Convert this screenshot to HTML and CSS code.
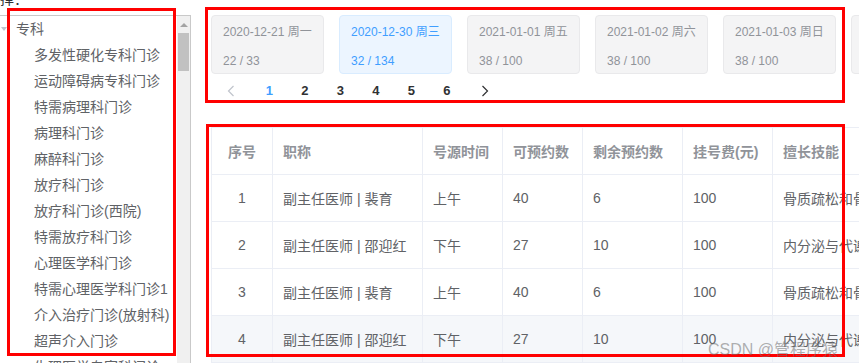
FILE: index.html
```html
<!DOCTYPE html>
<html lang="zh-CN">
<head>
    <meta charset="UTF-8">
    <meta name="viewport" content="width=device-width, initial-scale=1.0">
    <title>预约挂号</title>
    <link rel="stylesheet" href="styles.css">
</head>
<body>
    <div class="page">
        <div class="label">选择：</div>

        <div class="main">
            <aside class="tree-box">
                <ul class="tree">
                    <li class="tree-node root"><span class="caret"></span>专科</li>
                    <li class="tree-node">多发性硬化专科门诊</li>
                    <li class="tree-node">运动障碍病专科门诊</li>
                    <li class="tree-node">特需病理科门诊</li>
                    <li class="tree-node">病理科门诊</li>
                    <li class="tree-node">麻醉科门诊</li>
                    <li class="tree-node">放疗科门诊</li>
                    <li class="tree-node">放疗科门诊(西院)</li>
                    <li class="tree-node">特需放疗科门诊</li>
                    <li class="tree-node">心理医学科门诊</li>
                    <li class="tree-node">特需心理医学科门诊1</li>
                    <li class="tree-node">介入治疗门诊(放射科)</li>
                    <li class="tree-node">超声介入门诊</li>
                    <li class="tree-node">生理医学专家科门诊</li>
                </ul>
                <div class="scrollbar">
                    <div class="scroll-arrow"><span></span></div>
                    <div class="scroll-thumb"></div>
                </div>
            </aside>

            <section class="content">
                <div class="dates">
                    <div class="date-card">
                        <div class="date-day">2020-12-21 周一</div>
                        <div class="date-count">22 / 33</div>
                    </div>
                    <div class="date-card active">
                        <div class="date-day">2020-12-30 周三</div>
                        <div class="date-count">32 / 134</div>
                    </div>
                    <div class="date-card">
                        <div class="date-day">2021-01-01 周五</div>
                        <div class="date-count">38 / 100</div>
                    </div>
                    <div class="date-card">
                        <div class="date-day">2021-01-02 周六</div>
                        <div class="date-count">38 / 100</div>
                    </div>
                    <div class="date-card">
                        <div class="date-day">2021-01-03 周日</div>
                        <div class="date-count">38 / 100</div>
                    </div>
                    <div class="date-card">
                        <div class="date-day">2021-01-04 周一</div>
                        <div class="date-count">38 / 100</div>
                    </div>
                </div>

                <div class="pagination">
                    <button class="btn-prev" disabled>
                        <svg width="8" height="12" viewBox="0 0 8 12"><path d="M6.5 1 L1.5 6 L6.5 11" fill="none" stroke="currentColor" stroke-width="1.2"/></svg>
                    </button>
                    <ul class="pager">
                        <li class="active">1</li>
                        <li>2</li>
                        <li>3</li>
                        <li>4</li>
                        <li>5</li>
                        <li>6</li>
                    </ul>
                    <button class="btn-next">
                        <svg width="8" height="12" viewBox="0 0 8 12"><path d="M1.5 1 L6.5 6 L1.5 11" fill="none" stroke="currentColor" stroke-width="1.2"/></svg>
                    </button>
                </div>

                <table class="doctor-table">
                    <colgroup>
                        <col style="width: 61px">
                        <col style="width: 150px">
                        <col style="width: 80px">
                        <col style="width: 80px">
                        <col style="width: 100px">
                        <col style="width: 90px">
                        <col style="width: 240px">
                    </colgroup>
                    <thead>
                        <tr>
                            <th class="center">序号</th>
                            <th>职称</th>
                            <th>号源时间</th>
                            <th>可预约数</th>
                            <th>剩余预约数</th>
                            <th>挂号费(元)</th>
                            <th>擅长技能</th>
                        </tr>
                    </thead>
                    <tbody>
                        <tr>
                            <td class="center">1</td>
                            <td>副主任医师 | 裴育</td>
                            <td>上午</td>
                            <td>40</td>
                            <td>6</td>
                            <td>100</td>
                            <td>骨质疏松和骨代谢疾病</td>
                        </tr>
                        <tr>
                            <td class="center">2</td>
                            <td>副主任医师 | 邵迎红</td>
                            <td>下午</td>
                            <td>27</td>
                            <td>10</td>
                            <td>100</td>
                            <td>内分泌与代谢性疾病</td>
                        </tr>
                        <tr>
                            <td class="center">3</td>
                            <td>副主任医师 | 裴育</td>
                            <td>上午</td>
                            <td>40</td>
                            <td>6</td>
                            <td>100</td>
                            <td>骨质疏松和骨代谢疾病</td>
                        </tr>
                        <tr class="hover">
                            <td class="center">4</td>
                            <td>副主任医师 | 邵迎红</td>
                            <td>下午</td>
                            <td>27</td>
                            <td>10</td>
                            <td>100</td>
                            <td>内分泌与代谢性疾病</td>
                        </tr>
                    </tbody>
                </table>
            </section>
        </div>

        <!-- 标注框 -->
        <div class="mark mark-tree"></div>
        <div class="mark mark-dates"></div>
        <div class="mark mark-table"></div>
        <div class="watermark">CSDN @管程序猿</div>
    </div>
</body>
</html>
```

FILE: styles.css
```css
:root {
    --text-main: #303133;
    --text-regular: #606266;
    --text-secondary: #909399;
    --text-placeholder: #c0c4cc;
    --primary: #409eff;
    --border-light: #ebeef5;
}

body {
    margin: 0;
    overflow: hidden;
    font-family: "Liberation Sans", "Noto Sans CJK SC", sans-serif;
    color: var(--text-regular);
    background: #fff;
}

.page {
    position: relative;
    display: flow-root;
    width: 1200px;
    height: 363px;
}

.label {
    margin: -13px 0 4px -14px;
    height: 24px;
    line-height: 24px;
    font-size: 14px;
    color: var(--text-main);
}

.main {
    display: flex;
    align-items: flex-start;
    gap: 20px;
}

/* 左侧科室树 */
.tree-box {
    display: flex;
    width: 191px;
    height: 400px;
    box-sizing: border-box;
    border-top: 1px solid #c9c9c9;
    border-right: 1px solid #c9c9c9;
    background: #fff;
}

.tree {
    list-style: none;
    margin: 0;
    padding: 0;
    flex: 1;
    overflow: hidden;
}

.tree-node {
    height: 26px;
    line-height: 26px;
    font-size: 14px;
    padding-left: 34px;
    white-space: nowrap;
}

.tree-node.root {
    display: flex;
    align-items: center;
    padding-left: 1px;
}

.caret {
    width: 0;
    height: 0;
    border-left: 3px solid transparent;
    border-right: 3px solid transparent;
    border-top: 4px solid var(--text-placeholder);
    margin-right: 9px;
}

.scrollbar {
    width: 13px;
    background: #f0f0f0;
}

.scroll-arrow {
    height: 17px;
    display: flex;
    justify-content: center;
    align-items: center;
}

.scroll-arrow span {
    width: 0;
    height: 0;
    border-left: 4px solid transparent;
    border-right: 4px solid transparent;
    border-bottom: 4px solid #a3a3a3;
}

.scroll-thumb {
    margin: 0 1px;
    height: 38px;
    background: #c1c1c1;
}

/* 日期卡片 */
.content {
    flex: 1;
}

.dates {
    display: flex;
    gap: 15px;
}

.date-card {
    flex: none;
    width: 113px;
    height: 59px;
    box-sizing: border-box;
    padding: 6px 11px 0;
    border: 1px solid #e9e9eb;
    border-radius: 4px;
    background: #f4f4f5;
    color: var(--text-secondary);
    font-size: 12px;
    line-height: 20px;
    white-space: nowrap;
}

.date-card.active {
    background: #ecf5ff;
    border-color: #d9ecff;
    color: var(--primary);
}

.date-count {
    margin-top: 9px;
}

/* 分页 */
.pagination {
    display: flex;
    padding: 3px 5px;
}

.pagination button {
    min-width: 35.5px;
    height: 28px;
    box-sizing: border-box;
    border: none;
    background: none;
    color: var(--text-main);
    display: flex;
    align-items: center;
    justify-content: center;
    cursor: pointer;
}

.btn-prev {
    padding: 0 12px 0 6px;
}

.btn-next {
    padding: 0 6px 0 12px;
}

.pagination button:disabled {
    color: var(--text-placeholder);
    cursor: not-allowed;
}

.pager {
    display: flex;
    list-style: none;
    margin: 0;
    padding: 0;
}

.pager li {
    min-width: 35.5px;
    height: 28px;
    line-height: 28px;
    text-align: center;
    font-size: 13px;
    font-weight: bold;
    color: var(--text-main);
    cursor: pointer;
}

.pager li.active {
    color: var(--primary);
}

/* 医生表格 */
.doctor-table {
    margin-top: 19px;
    table-layout: fixed;
    width: 801px;
    border-collapse: collapse;
    border-top: 1px solid var(--border-light);
    border-left: 1px solid var(--border-light);
    font-size: 14px;
}

.doctor-table th,
.doctor-table td {
    height: 47px;
    padding: 0 10px;
    box-sizing: border-box;
    text-align: left;
    border-right: 1px solid var(--border-light);
    border-bottom: 1px solid var(--border-light);
    white-space: nowrap;
    overflow: hidden;
}

.doctor-table th {
    color: var(--text-secondary);
    font-weight: bold;
}

.doctor-table td {
    color: var(--text-regular);
}

.doctor-table .center {
    text-align: center;
}

.doctor-table tr.hover td {
    background: #f5f7fa;
}

/* 截图上的红色标注 */
.mark {
    position: absolute;
    box-sizing: border-box;
    border: 3px solid #ff0000;
}

.mark-tree {
    left: 7px;
    top: 8px;
    width: 169px;
    height: 348px;
}

.mark-dates {
    left: 205px;
    top: 7px;
    width: 640px;
    height: 96px;
}

.mark-table {
    left: 206px;
    top: 124px;
    width: 639px;
    height: 233px;
}

.watermark {
    position: absolute;
    left: 708px;
    top: 336px;
    font-size: 16px;
    color: rgba(110, 110, 110, 0.55);
    white-space: nowrap;
}
```
